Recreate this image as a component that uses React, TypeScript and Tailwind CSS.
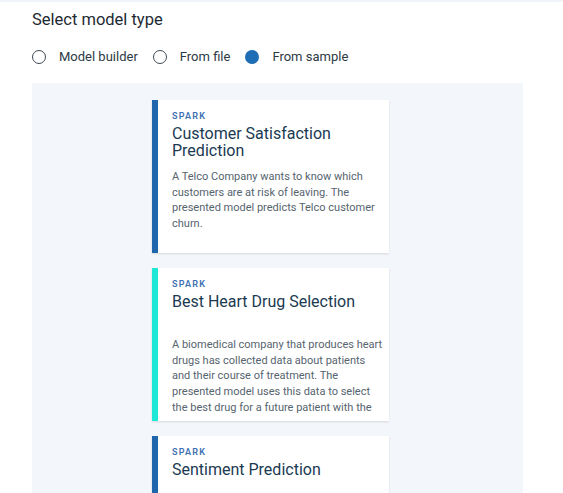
import React from "react";

type Card = { title: string; desc: string; bar: string };

const cards: Card[] = [
  {
    title: "Customer Satisfaction Prediction",
    desc: "A Telco Company wants to know which customers are at risk of leaving. The presented model predicts Telco customer churn.",
    bar: "bg-[#1f66ad]",
  },
  {
    title: "Best Heart Drug Selection",
    desc: "A biomedical company that produces heart drugs has collected data about patients and their course of treatment. The presented model uses this data to select the best drug for a future patient with the same health problem.",
    bar: "bg-[#1ee8d8]",
  },
  {
    title: "Sentiment Prediction",
    desc: "A model that predicts the sentiment of customer comments based on the text they contain.",
    bar: "bg-[#1f66ad]",
  },
];

function Radio({ label, checked }: { label: string; checked?: boolean }) {
  return (
    <div className="flex items-center">
      {checked ? (
        <span className="w-[14px] h-[14px] rounded-full bg-[#1f6db5]" />
      ) : (
        <span className="w-[14px] h-[14px] rounded-full border border-[#3d4a55] bg-white" />
      )}
      <span className="ml-[13px] text-[13px] text-[#2d3a45]">{label}</span>
    </div>
  );
}

export default function App() {
  return (
    <div
      className="w-[563px] h-[493px] overflow-hidden bg-white border-t-2 border-[#f1f4f8]"
      style={{ fontFamily: 'Roboto, "Noto Sans", sans-serif' }}
    >
      <div className="pl-[32px]">
        <h2 className="text-[16.5px] leading-[24px] pt-[6px] text-[#1e2a33]">Select model type</h2>
        <div className="flex items-center gap-[15px] mt-[16px] h-[18px]">
          <Radio label="Model builder" />
          <Radio label="From file" />
          <Radio label="From sample" checked />
        </div>
        <div className="mt-[17px] w-[491px] h-[420px] bg-[#f3f6fa] pt-[17px] pl-[120px] flex flex-col gap-[15px]">
          {cards.map((c) => (
            <div
              key={c.title}
              className="relative w-[237px] h-[153px] shrink-0 bg-white shadow-[0_1px_2px_rgba(0,0,0,0.12)] overflow-hidden flex"
            >
              <div className={`w-[6px] shrink-0 ${c.bar}`} />
              <div className="pl-[14px] pr-[5px] pt-[10px]">
                <div className="text-[9px] leading-[12px] font-semibold tracking-[0.14em] text-[#3d70b2]">SPARK</div>
                <div className="mt-[3px] text-[16px] leading-[17px] text-[#1b3a52] min-h-[34px] pr-[6px]">{c.title}</div>
                <p className="mt-[10px] max-h-[79px] overflow-hidden text-[11px] leading-[15.7px] text-[#56646e]">{c.desc}</p>
              </div>
            </div>
          ))}
        </div>
      </div>
    </div>
  );
}
